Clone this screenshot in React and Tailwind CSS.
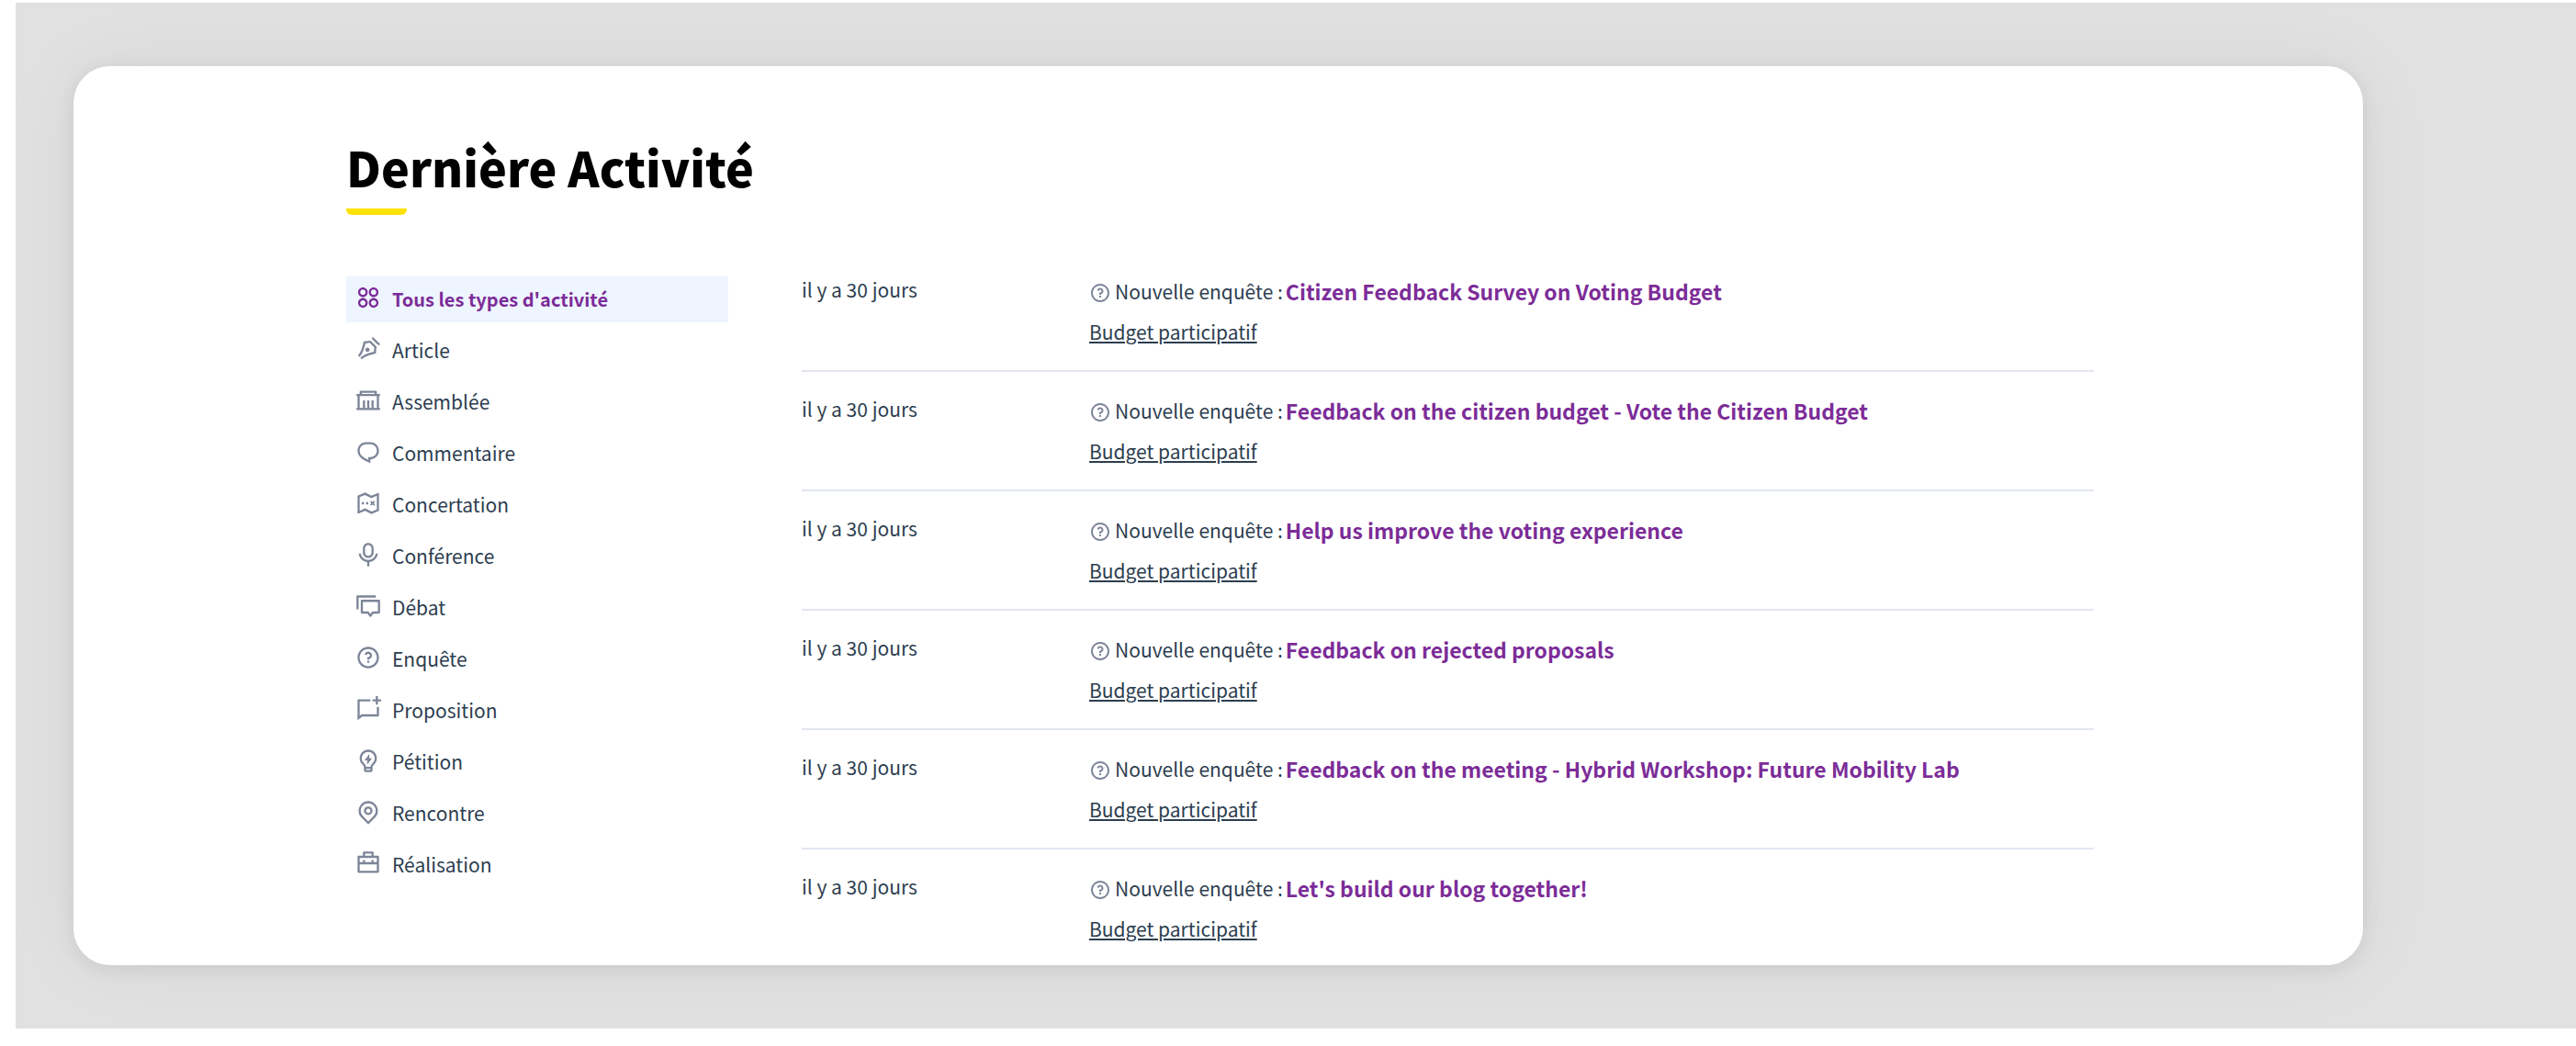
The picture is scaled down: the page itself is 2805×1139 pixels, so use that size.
import {
  RiApps2Line,
  RiPenNibLine,
  RiGovernmentLine,
  RiChat1Line,
  RiTreasureMapLine,
  RiMicLine,
  RiDiscussLine,
  RiQuestionLine,
  RiChatNewLine,
  RiLightbulbFlashLine,
  RiMapPinLine,
  RiBriefcase2Line,
} from 'react-icons/ri';

const activityTypes = [
  { label: "Tous les types d'activité", icon: RiApps2Line, active: true },
  { label: 'Article', icon: RiPenNibLine },
  { label: 'Assemblée', icon: RiGovernmentLine },
  { label: 'Commentaire', icon: RiChat1Line },
  { label: 'Concertation', icon: RiTreasureMapLine },
  { label: 'Conférence', icon: RiMicLine },
  { label: 'Débat', icon: RiDiscussLine },
  { label: 'Enquête', icon: RiQuestionLine },
  { label: 'Proposition', icon: RiChatNewLine },
  { label: 'Pétition', icon: RiLightbulbFlashLine },
  { label: 'Rencontre', icon: RiMapPinLine },
  { label: 'Réalisation', icon: RiBriefcase2Line },
];

const activities = [
  'Citizen Feedback Survey on Voting Budget',
  'Feedback on the citizen budget - Vote the Citizen Budget',
  'Help us improve the voting experience',
  'Feedback on rejected proposals',
  'Feedback on the meeting - Hybrid Workshop: Future Mobility Lab',
  "Let's build our blog together!",
].map((title) => ({ title, date: 'il y a 30 jours', space: 'Budget participatif' }));

function TypeLink({ label, icon: Icon, active }) {
  return (
    <li>
      <a
        href="#"
        aria-current={active ? 'page' : undefined}
        className={
          active
            ? 'flex items-center gap-3 h-[50px] px-[10px] bg-[#eef5ff] text-[#7c2c98] text-[20px] font-bold'
            : 'flex items-center gap-3 h-[50px] px-[10px] text-[#2d3e50]'
        }
      >
        <Icon className={active ? 'size-7 mb-1' : 'size-7 mb-1 text-[#7d8598]'} />
        <span>{label}</span>
      </a>
    </li>
  );
}

function ActivityRow({ date, title, space }) {
  return (
    <li className="flex pt-[26px] pb-6 border-b-2 border-[#e1e6ef] first:pt-0 last:border-b-0 last:pb-[22px]">
      <time className="w-[313px] shrink-0 leading-7">{date}</time>
      <div className="flex-1">
        <p className="flex items-center leading-8">
          <RiQuestionLine className="size-6 mr-1 mt-1 text-[#7d8598]" />
          <span className="mr-[3px]">Nouvelle enquête :</span>
          <a href="#" className="text-[23px] font-bold text-[#7c2c98]">{title}</a>
        </p>
        <a href="#" className="inline-block mt-3 mb-[2px] leading-8 underline">{space}</a>
      </div>
    </li>
  );
}

export default function App() {
  return (
    <div className="pt-[3px] pl-[17px] bg-white font-['Noto_Sans_CJK_SC','Source_Sans_Pro',sans-serif] text-[21px] text-[#2d3e50]">
      <main className="bg-[#e1e1e1] pt-[69px] pb-[69px] pl-[63px] pr-[232px] overflow-hidden">
        <div className="bg-white rounded-[40px] pl-[297px] pr-[293px] pt-[74px] shadow-[0_4px_20px_rgba(0,0,0,0.08),0_0_90px_rgba(0,0,0,0.05)]">
          <h1 className="text-[52px] leading-[72px] font-black text-black">Dernière Activité</h1>
          <div className="w-[66px] h-[7px] mt-[9px] bg-[#ffe206] rounded-b-md" />

          <div className="flex gap-20 mt-[67px]">
            <nav aria-label="Types d'activité" className="w-[416px] shrink-0">
              <ul className="flex flex-col gap-[6px]">
                {activityTypes.map((type) => (
                  <TypeLink key={type.label} {...type} />
                ))}
              </ul>
            </nav>

            <ul className="flex-1">
              {activities.map((activity) => (
                <ActivityRow key={activity.title} {...activity} />
              ))}
            </ul>
          </div>
        </div>
      </main>
    </div>
  );
}
